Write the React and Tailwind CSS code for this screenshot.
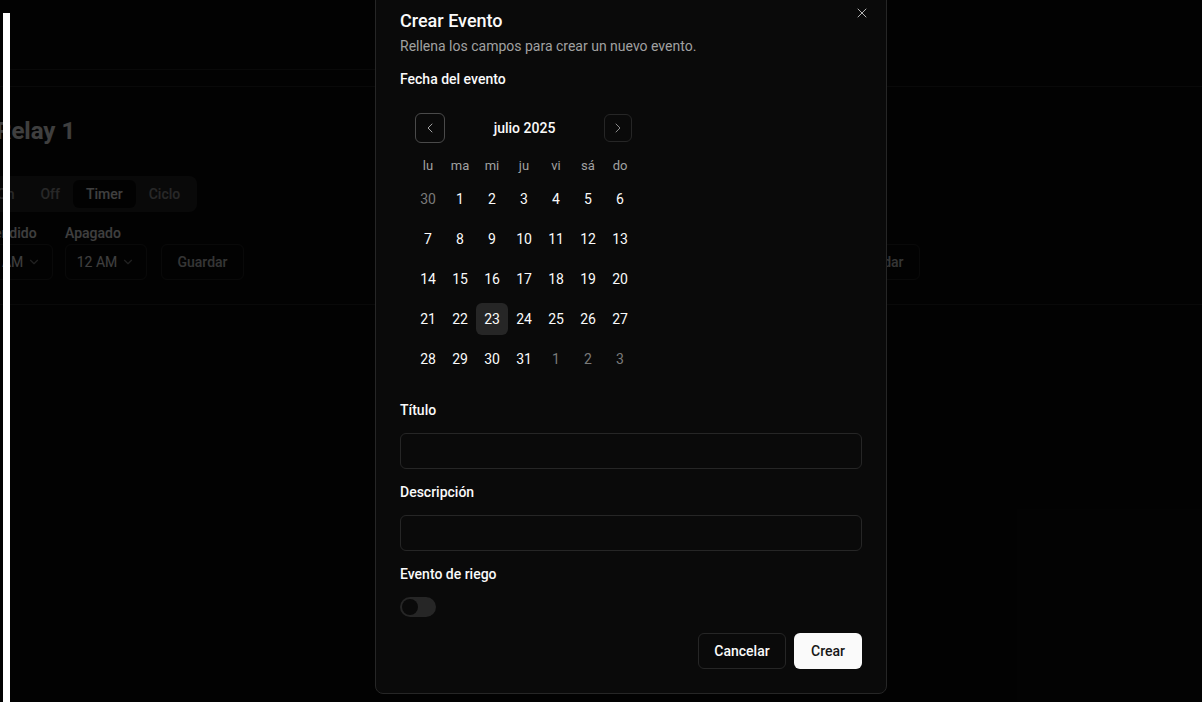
import React from "react";
import { X, ChevronLeft, ChevronRight, ChevronDown } from "lucide-react";

const weeks = [
  [[30, true], [1], [2], [3], [4], [5], [6]],
  [[7], [8], [9], [10], [11], [12], [13]],
  [[14], [15], [16], [17], [18], [19], [20]],
  [[21], [22], [23], [24], [25], [26], [27]],
  [[28], [29], [30], [31], [1, true], [2, true], [3, true]],
];
const weekdays = ["lu", "ma", "mi", "ju", "vi", "sá", "do"];

function RelayPanel({ title }) {
  return (
    <div className="border-b border-[#262626] pb-6">
      <h1 className="mt-[26px] h-9 pl-[25px] text-2xl font-bold leading-9 text-[#fafafa]">{title}</h1>
      <div className="ml-[9px] mt-[27px] inline-flex h-9 items-center rounded-lg bg-[#262626] p-1 text-sm font-medium">
        <div className="px-[13px] py-1 text-[#a1a1a1]">On</div>
        <div className="px-[13px] py-1 text-[#a1a1a1]">Off</div>
        <div className="rounded-md bg-[#0a0a0a] px-[13px] py-1 text-[#fafafa]">Timer</div>
        <div className="px-[13px] py-1 text-[#a1a1a1]">Ciclo</div>
      </div>
      <div className="mt-[11px] flex items-end gap-3">
        <div className="flex flex-col gap-px">
          <span className="text-sm font-medium text-[#fafafa]">Encendido</span>
          <div className="flex h-9 w-[82px] items-center justify-center gap-1 rounded-md border border-[#262626] text-sm text-[#fafafa]">
            12 AM <ChevronDown className="h-3.5 w-3.5 opacity-50" />
          </div>
        </div>
        <div className="flex flex-col gap-px">
          <span className="text-sm font-medium text-[#fafafa]">Apagado</span>
          <div className="flex h-9 w-[82px] items-center justify-center gap-1 rounded-md border border-[#262626] text-sm text-[#fafafa]">
            12 AM <ChevronDown className="h-3.5 w-3.5 opacity-50" />
          </div>
        </div>
        <div className="ml-[2px] flex h-9 w-[83px] items-center justify-center rounded-md border border-[#262626] text-sm font-medium text-[#d4d4d4]">
          Guardar
        </div>
      </div>
    </div>
  );
}

export default function App() {
  return (
    <div className="relative h-[702px] w-[1202px] overflow-hidden bg-[#0a0a0a] font-['Roboto','Liberation_Sans',sans-serif] text-[#fafafa]">
      {/* underlying page */}
      <div className="flex h-[87px] items-end border-b border-[#262626]">
        <div className="ml-[10px] h-[17px] w-[380px] border-t border-[#262626]" />
      </div>
      <div className="ml-[-29px] grid grid-cols-[676px_676px]">
        <RelayPanel title="Relay 1" />
        <RelayPanel title="Relay 2" />
      </div>

      {/* overlay */}
      <div className="absolute inset-0 bg-black/75" />

      {/* side bar */}
      <div className="absolute bottom-0 left-[3px] top-[13px] w-[7px] bg-white" />

      {/* dialog */}
      <div className="absolute left-[375px] top-[-13px] flex w-[512px] flex-col gap-4 rounded-lg border border-[#262626] bg-[#0a0a0a] p-6">
        <div className="flex flex-col gap-1.5">
          <h2 className="text-lg font-medium leading-none text-[#fafafa]">Crear Evento</h2>
          <p className="text-sm text-[#a1a1a1]">Rellena los campos para crear un nuevo evento.</p>
        </div>

        <label className="text-sm font-medium leading-none">Fecha del evento</label>

        <div className="w-fit p-3">
          <div className="flex h-7 w-[224px] items-center justify-between">
            <div className="ml-[3px] flex h-[30px] w-[30px] items-center justify-center rounded-md border border-[#4a4a4a]">
              <ChevronLeft className="h-4 w-4 text-[#a3a3a3]" strokeWidth={1.5} />
            </div>
            <span className="text-sm font-medium">julio 2025</span>
            <div className="mr-[4px] flex h-7 w-7 items-center justify-center rounded-md border border-[#262626]">
              <ChevronRight className="h-4 w-4 text-[#8a8a8a]" strokeWidth={1.5} />
            </div>
          </div>
          <div className="mt-[14px] grid h-[18px] grid-cols-7">
            {weekdays.map((d) => (
              <div key={d} className="flex items-center justify-center text-[13px] text-[#a1a1a1]">
                {d}
              </div>
            ))}
          </div>
          <div className="mt-[9px] flex flex-col gap-2">
            {weeks.map((w, i) => (
              <div key={i} className="grid grid-cols-7">
                {w.map(([n, out], j) => (
                  <div
                    key={j}
                    className={
                      "flex h-8 w-8 items-center justify-center rounded-md text-sm " +
                      (out ? "text-[#7a7a7a] " : "text-[#fafafa] ") +
                      (n === 23 && !out ? "bg-[#262626]" : "")
                    }
                  >
                    {n}
                  </div>
                ))}
              </div>
            ))}
          </div>
        </div>

        <label className="text-sm font-medium leading-none">Título</label>
        <div className="h-9 w-full rounded-md border border-[#262626]" />

        <label className="text-sm font-medium leading-none">Descripción</label>
        <div className="h-9 w-full rounded-md border border-[#262626]" />

        <label className="text-sm font-medium leading-none">Evento de riego</label>
        <div className="flex h-5 w-9 items-center rounded-full bg-[#262626] p-[2px]">
          <div className="h-4 w-4 rounded-full bg-[#0a0a0a]" />
        </div>

        <div className="flex justify-end gap-2">
          <div className="flex h-9 w-[88px] items-center justify-center rounded-md border border-[#262626] bg-[#0a0a0a] text-sm font-medium text-[#fafafa]">
            Cancelar
          </div>
          <div className="flex h-9 w-[68px] items-center justify-center rounded-md bg-[#fafafa] text-sm font-medium text-[#171717]">
            Crear
          </div>
        </div>

        <div className="absolute right-4 top-[17px] text-[#b5b5b5]">
          <X className="h-4 w-4" strokeWidth={1.5} />
        </div>
      </div>
    </div>
  );
}
